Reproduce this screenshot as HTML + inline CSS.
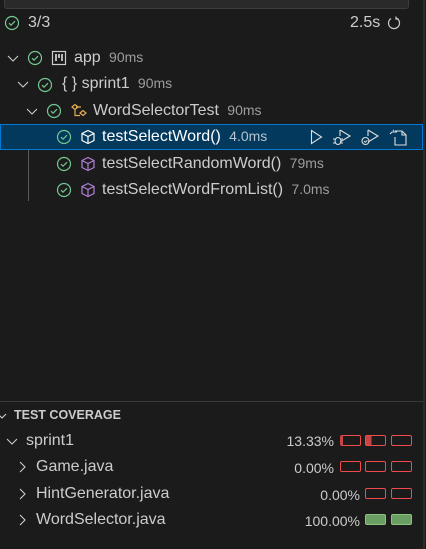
<!DOCTYPE html>
<html><head><meta charset="utf-8"><style>
html,body{margin:0;padding:0;}
body{width:426px;height:549px;background:#1b1b1b;position:relative;overflow:hidden;font-family:"Liberation Sans",sans-serif;color:#cccccc;}
.a{position:absolute;white-space:nowrap;}
.t{font-size:16px;}
.ms{font-size:14px;color:#9d9d9d;}
.bar{position:absolute;box-sizing:border-box;width:21px;height:11px;border:1px solid #f14c4c;border-radius:2px;}
.g{background:#6a9e62;border-color:#8cc47f;}
svg{position:absolute;}
</style></head><body>
<div class="a" style="left:4px;top:-4px;width:403px;height:11px;background:#2a2a2a;border:1px solid #3c3c3c;border-radius:3px"></div>
<div class="a" style="left:423px;top:0;width:2px;height:549px;background:#2b2b2b"></div>

<svg style="left:4px;top:15px" width="16" height="16" viewBox="0 0 16 16"><circle cx="8" cy="8" r="6.5" fill="none" stroke="#73c991" stroke-width="1.2"/><path d="M5 8.2l2 2 4-4" fill="none" stroke="#73c991" stroke-width="1.2"/></svg>
<div class="a t" style="left:28px;top:14px">3/3</div>
<div class="a t" style="left:350px;top:14px">2.5s</div>
<svg style="left:386px;top:15px" width="16" height="16" viewBox="0 0 16 16"><path d="M10.5 3.2A5.5 5.5 0 1 1 5 3.5" fill="none" stroke="#ccc" stroke-width="1.2"/><path d="M10 1.5v2.5h2.5" fill="none" stroke="#ccc" stroke-width="1.2"/></svg>

<svg style="left:6px;top:51px" width="14" height="14" viewBox="0 0 14 14"><path d="M2 5l5 5 5-5" fill="none" stroke="#ccc" stroke-width="1.1"/></svg>
<svg style="left:27px;top:50px" width="16" height="16" viewBox="0 0 16 16"><circle cx="8" cy="8" r="6.5" fill="none" stroke="#73c991" stroke-width="1.2"/><path d="M5 8.2l2 2 4-4" fill="none" stroke="#73c991" stroke-width="1.2"/></svg>
<svg style="left:51px;top:50px" width="16" height="16" viewBox="0 0 16 16"><rect x="1.5" y="1.5" width="13" height="13" fill="none" stroke="#ccc" stroke-width="1.2"/><path d="M5 4v7M8 4v4M11 4v7" stroke="#ccc" stroke-width="1.8"/></svg>
<div class="a t" style="left:74px;top:49px">app <span class="ms">&nbsp;90ms</span></div>

<svg style="left:16px;top:77px" width="14" height="14" viewBox="0 0 14 14"><path d="M2 5l5 5 5-5" fill="none" stroke="#ccc" stroke-width="1.1"/></svg>
<svg style="left:37px;top:77px" width="16" height="16" viewBox="0 0 16 16"><circle cx="8" cy="8" r="6.5" fill="none" stroke="#73c991" stroke-width="1.2"/><path d="M5 8.2l2 2 4-4" fill="none" stroke="#73c991" stroke-width="1.2"/></svg>
<div class="a t" style="left:62px;top:75px">{ } sprint1 <span class="ms">&nbsp;90ms</span></div>

<svg style="left:25px;top:104px" width="14" height="14" viewBox="0 0 14 14"><path d="M2 5l5 5 5-5" fill="none" stroke="#ccc" stroke-width="1.1"/></svg>
<svg style="left:46px;top:103px" width="16" height="16" viewBox="0 0 16 16"><circle cx="8" cy="8" r="6.5" fill="none" stroke="#73c991" stroke-width="1.2"/><path d="M5 8.2l2 2 4-4" fill="none" stroke="#73c991" stroke-width="1.2"/></svg>
<svg style="left:70px;top:103px" width="18" height="16" viewBox="0 0 18 16"><path d="M2 4l3-2.5 3 2.5-3 2.5zM5 6.5v6h5M10 10l3-2.5 3 2.5-3 2.5zM6 4h5" fill="none" stroke="#e8ab53" stroke-width="1.2"/></svg>
<div class="a t" style="left:93px;top:102px">WordSelectorTest <span class="ms">&nbsp;90ms</span></div>

<div class="a" style="left:0;top:124px;width:421px;height:24px;background:#04395e;border:1px solid #0078d4"></div>
<div class="a" style="left:28px;top:150px;width:1px;height:51px;background:#585858"></div>
<svg style="left:56px;top:129px" width="16" height="16" viewBox="0 0 16 16"><circle cx="8" cy="8" r="6.5" fill="none" stroke="#73c991" stroke-width="1.2"/><path d="M5 8.2l2 2 4-4" fill="none" stroke="#73c991" stroke-width="1.2"/></svg>
<svg style="left:80px;top:129px" width="16" height="16" viewBox="0 0 16 16"><path d="M8 1.5l6 3v7l-6 3-6-3v-7zM2 4.5l6 3 6-3M8 7.5v7" fill="none" stroke="#fff" stroke-width="1.2"/></svg>
<div class="a t" style="left:102px;top:128px;color:#fff">testSelectWord() <span class="ms" style="color:#b5c3d0">&nbsp;4.0ms</span></div>
<svg style="left:308px;top:129px" width="16" height="16" viewBox="0 0 16 16"><path d="M3.5 1.5v13l10-6.5z" fill="none" stroke="#ddd" stroke-width="1.1"/></svg>
<svg style="left:332px;top:128px" width="20" height="18" viewBox="0 0 20 18"><path d="M8 2v6M8 2l10 6-10 6" fill="none" stroke="#ddd" stroke-width="1.1"/><ellipse cx="6" cy="13" rx="3" ry="3.5" fill="none" stroke="#ddd" stroke-width="1.1"/><path d="M1 11h2M1 15h2M9 11h2M9 15h2" stroke="#ddd"/></svg>
<svg style="left:360px;top:128px" width="20" height="18" viewBox="0 0 20 18"><path d="M8 2v6M8 2l10 6-10 6" fill="none" stroke="#ddd" stroke-width="1.1"/><circle cx="5.5" cy="13" r="3.5" fill="none" stroke="#ddd" stroke-width="1.1"/><path d="M4 13l1.3 1.3 2-2" fill="none" stroke="#ddd"/></svg>
<svg style="left:388px;top:128px" width="20" height="18" viewBox="0 0 20 18"><path d="M7 3h7l4 4v10H7v-8M14 3v4h4M2 6l2-2h5M5 2l1 1" fill="none" stroke="#ddd" stroke-width="1.1"/></svg>

<svg style="left:56px;top:156px" width="16" height="16" viewBox="0 0 16 16"><circle cx="8" cy="8" r="6.5" fill="none" stroke="#73c991" stroke-width="1.2"/><path d="M5 8.2l2 2 4-4" fill="none" stroke="#73c991" stroke-width="1.2"/></svg>
<svg style="left:80px;top:156px" width="16" height="16" viewBox="0 0 16 16"><path d="M8 1.5l6 3v7l-6 3-6-3v-7zM2 4.5l6 3 6-3M8 7.5v7" fill="none" stroke="#b180d7" stroke-width="1.2"/></svg>
<div class="a t" style="left:102px;top:155px">testSelectRandomWord() <span class="ms">&nbsp;79ms</span></div>
<svg style="left:56px;top:182px" width="16" height="16" viewBox="0 0 16 16"><circle cx="8" cy="8" r="6.5" fill="none" stroke="#73c991" stroke-width="1.2"/><path d="M5 8.2l2 2 4-4" fill="none" stroke="#73c991" stroke-width="1.2"/></svg>
<svg style="left:80px;top:182px" width="16" height="16" viewBox="0 0 16 16"><path d="M8 1.5l6 3v7l-6 3-6-3v-7zM2 4.5l6 3 6-3M8 7.5v7" fill="none" stroke="#b180d7" stroke-width="1.2"/></svg>
<div class="a t" style="left:102px;top:181px">testSelectWordFromList() <span class="ms">&nbsp;7.0ms</span></div>

<div class="a" style="left:0;top:401px;width:423px;height:1px;background:#3a3a3a"></div>
<svg style="left:-4px;top:410px" width="12" height="12" viewBox="0 0 12 12"><path d="M2 4l4 4 4-4" fill="none" stroke="#ccc" stroke-width="1.1"/></svg>
<div class="a" style="left:14px;top:408px;font-size:12.5px;font-weight:bold;color:#cccccc">TEST COVERAGE</div>

<svg style="left:5px;top:434px" width="14" height="14" viewBox="0 0 14 14"><path d="M2 5l5 5 5-5" fill="none" stroke="#ccc" stroke-width="1.1"/></svg>
<div class="a t" style="left:26px;top:432px">sprint1</div>
<div class="a ms" style="right:92px;top:433px;color:#ccc">13.33%</div>
<div class="bar" style="left:340px;top:435px;border-left:3px solid #c74444"></div>
<div class="bar" style="left:365px;top:435px;background:linear-gradient(90deg,#c74444 30%,transparent 30%)"></div>
<div class="bar" style="left:391px;top:435px"></div>

<svg style="left:16px;top:460px" width="12" height="14" viewBox="0 0 12 14"><path d="M4 2l5 5-5 5" fill="none" stroke="#ccc" stroke-width="1.1"/></svg>
<div class="a t" style="left:36px;top:458px">Game.java</div>
<div class="a ms" style="right:92px;top:460px;color:#ccc">0.00%</div>
<div class="bar" style="left:340px;top:461px"></div><div class="bar" style="left:365px;top:461px"></div><div class="bar" style="left:391px;top:461px"></div>

<svg style="left:16px;top:487px" width="12" height="14" viewBox="0 0 12 14"><path d="M4 2l5 5-5 5" fill="none" stroke="#ccc" stroke-width="1.1"/></svg>
<div class="a t" style="left:36px;top:485px">HintGenerator.java</div>
<div class="a ms" style="right:66px;top:487px;color:#ccc">0.00%</div>
<div class="bar" style="left:365px;top:488px"></div><div class="bar" style="left:391px;top:488px"></div>

<svg style="left:16px;top:513px" width="12" height="14" viewBox="0 0 12 14"><path d="M4 2l5 5-5 5" fill="none" stroke="#ccc" stroke-width="1.1"/></svg>
<div class="a t" style="left:36px;top:511px">WordSelector.java</div>
<div class="a ms" style="right:66px;top:513px;color:#ccc">100.00%</div>
<div class="bar g" style="left:365px;top:514px"></div><div class="bar g" style="left:391px;top:514px"></div>
</body></html>
